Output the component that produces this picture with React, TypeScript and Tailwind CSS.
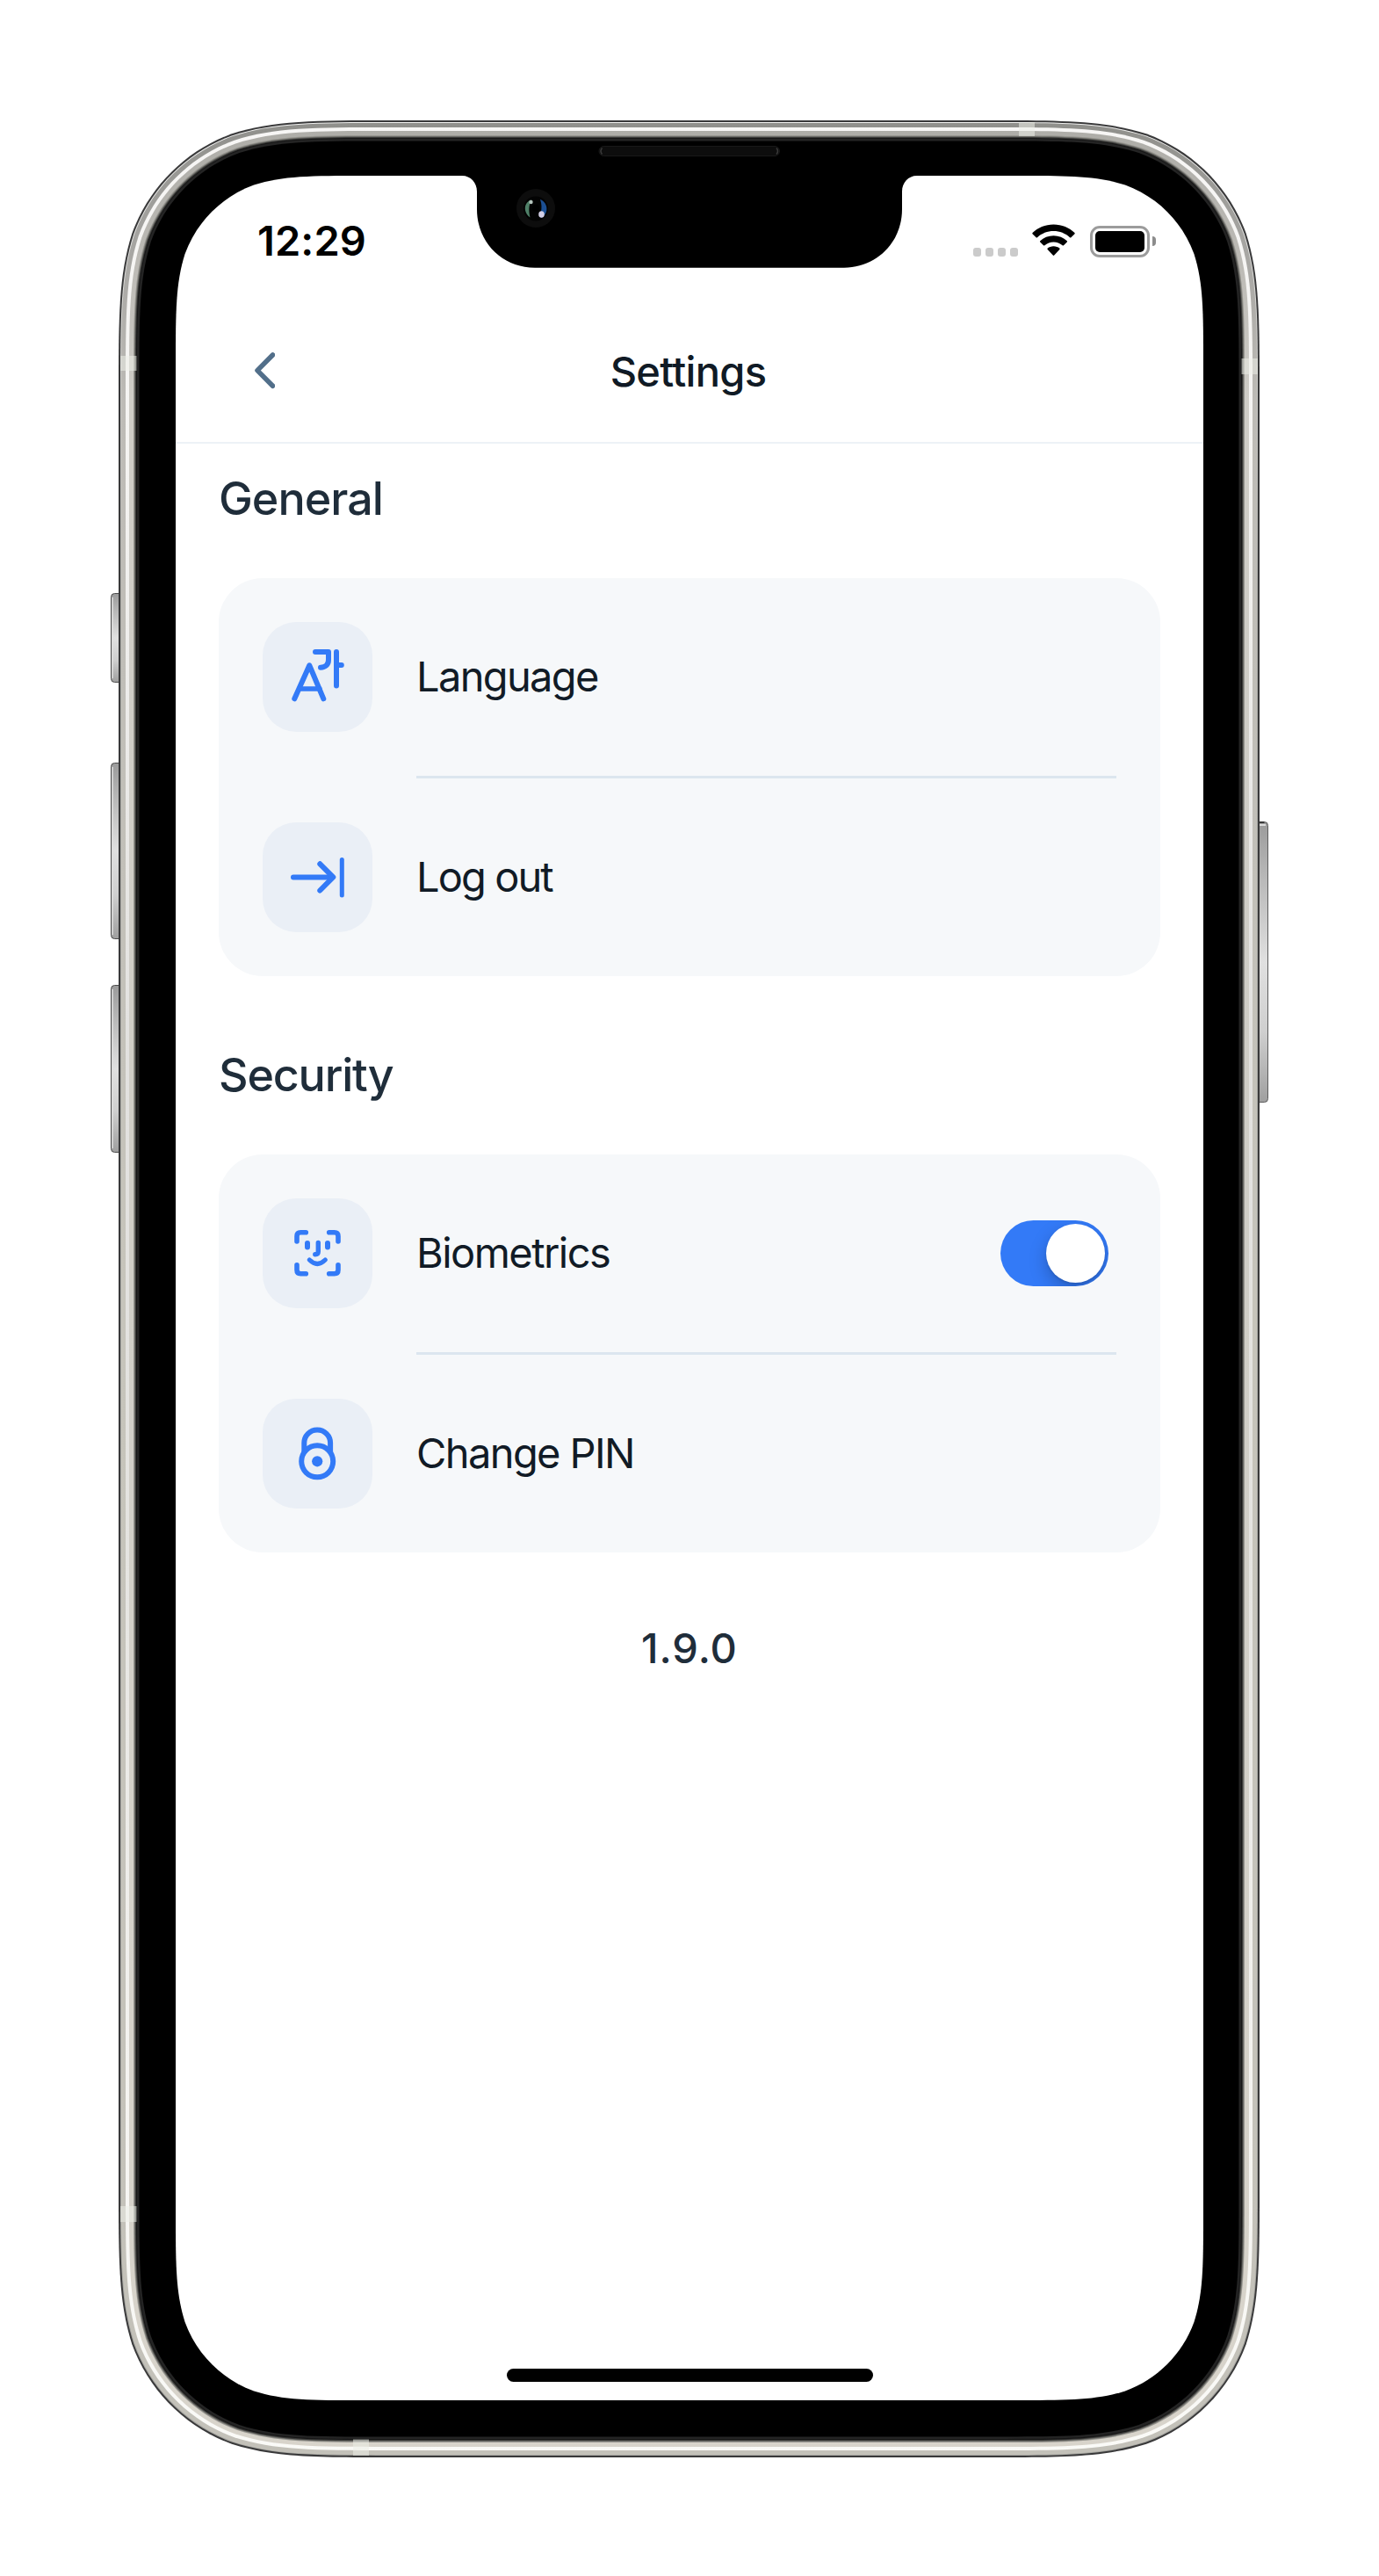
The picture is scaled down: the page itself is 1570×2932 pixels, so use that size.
import { useState, type ReactNode } from 'react';

/** Rounded rectangle with continuous-curvature corners. */
function squircle(x: number, y: number, w: number, h: number, r: number) {
  const a = 1.52866471 * r;
  const b = 1.08849323 * r;
  const c = 0.86840689 * r;
  const d = 0.63149379 * r;
  const e = 0.07491139 * r;
  const f = 0.37282383 * r;
  const g = 0.16905956 * r;
  const R = x + w;
  const B = y + h;
  return [
    `M${x + a} ${y}H${R - a}`,
    `C${R - b} ${y} ${R - c} ${y} ${R - d} ${y + e}`,
    `C${R - f} ${y + g} ${R - g} ${y + f} ${R - e} ${y + d}`,
    `C${R} ${y + c} ${R} ${y + b} ${R} ${y + a}`,
    `V${B - a}`,
    `C${R} ${B - b} ${R} ${B - c} ${R - e} ${B - d}`,
    `C${R - g} ${B - f} ${R - f} ${B - g} ${R - d} ${B - e}`,
    `C${R - c} ${B} ${R - b} ${B} ${R - a} ${B}`,
    `H${x + a}`,
    `C${x + b} ${B} ${x + c} ${B} ${x + d} ${B - e}`,
    `C${x + f} ${B - g} ${x + g} ${B - f} ${x + e} ${B - d}`,
    `C${x} ${B - c} ${x} ${B - b} ${x} ${B - a}`,
    `V${y + a}`,
    `C${x} ${y + b} ${x} ${y + c} ${x + e} ${y + d}`,
    `C${x + g} ${y + f} ${x + f} ${y + g} ${x + d} ${y + e}`,
    `C${x + c} ${y} ${x + b} ${y} ${x + a} ${y}Z`,
  ].join('');
}

const body = (inset: number) =>
  squircle(135 + inset, 137 + inset, 1299 - 2 * inset, 2660 - 2 * inset, 204 - inset);

const layers: [number, string][] = [
  [0, '#39393a'],
  [2, 'url(#rim)'],
  [3, 'url(#metal)'],
  [8, 'url(#shine)'],
  [12, 'url(#metal2)'],
  [17, '#96958f'],
  [18, '#6b6b67'],
  [19, '#3a3a38'],
  [20, '#161616'],
  [21, '#242424'],
  [23.5, '#000000'],
];

const bands = [
  [137, 405, 18.5, 17],
  [137, 2511, 18.5, 18],
  [1413.5, 408, 18.5, 18],
  [1160, 139, 18, 16],
  [402, 2776.5, 18, 18.5],
];

const leftButtons = [
  [675, 102],
  [868, 201],
  [1121, 191],
];

function PhoneBody() {
  return (
    <svg className="absolute inset-0" width="1570" height="2932" viewBox="0 0 1570 2932" fill="none" aria-hidden="true">
      <defs>
        <linearGradient id="rim" x1="0" y1="137" x2="0" y2="2797" gradientUnits="userSpaceOnUse">
          <stop offset="0" stopColor="#f2f2f1" />
          <stop offset="0.08" stopColor="#d5d5d2" />
          <stop offset="0.2" stopColor="#a9a9a5" />
          <stop offset="1" stopColor="#a5a5a0" />
        </linearGradient>
        <linearGradient id="metal" x1="0" y1="137" x2="0" y2="2797" gradientUnits="userSpaceOnUse">
          <stop offset="0" stopColor="#8f8f8b" />
          <stop offset="0.05" stopColor="#a5a4a1" />
          <stop offset="0.12" stopColor="#bdbbb6" />
          <stop offset="0.5" stopColor="#c6c4bb" />
          <stop offset="1" stopColor="#c3c1b9" />
        </linearGradient>
        <linearGradient id="metal2" x1="0" y1="137" x2="0" y2="2797" gradientUnits="userSpaceOnUse">
          <stop offset="0" stopColor="#adaca7" />
          <stop offset="0.06" stopColor="#bcbab5" />
          <stop offset="0.12" stopColor="#cfcdc7" />
          <stop offset="0.5" stopColor="#d0cec7" />
          <stop offset="1" stopColor="#d8d4cb" />
        </linearGradient>
        <linearGradient id="shine" x1="0" y1="137" x2="0" y2="2797" gradientUnits="userSpaceOnUse">
          <stop offset="0" stopColor="#f7f6f5" />
          <stop offset="0.15" stopColor="#f4f3f1" />
          <stop offset="0.4" stopColor="#e2e1df" />
          <stop offset="0.6" stopColor="#e4e3e0" />
          <stop offset="0.85" stopColor="#f5f4f1" />
          <stop offset="1" stopColor="#fafaf7" />
        </linearGradient>
        <linearGradient id="button" x1="0" y1="0" x2="0" y2="1">
          <stop offset="0" stopColor="#9b9b9b" />
          <stop offset="0.2" stopColor="#b8b8b8" />
          <stop offset="0.5" stopColor="#e0e0e0" />
          <stop offset="0.75" stopColor="#cfcfcf" />
          <stop offset="1" stopColor="#9f9f9f" />
        </linearGradient>
      </defs>

      {leftButtons.map(([y, h]) => (
        <g key={y}>
          <rect x="126.5" y={y + 0.5} width="20" height={h - 1} rx="4" fill="url(#button)" stroke="#4c4c4c" />
          <path d={`M128 ${y + 5}V${y + h - 5}`} stroke="#dcdcdc" strokeWidth="1.5" />
        </g>
      ))}
      <rect x="1424" y="935.5" width="19.5" height="319" rx="4" fill="url(#button)" stroke="#5c5c5c" />
      <path d="M1434 936H1439.5" stroke="#222222" strokeWidth="1.5" />
      <path d="M1434 939H1441" stroke="#dddddd" strokeWidth="2" />

      {layers.map(([inset, fill]) => (
        <path key={inset} d={body(inset)} fill={fill} />
      ))}
      {bands.map(([x, y, w, h]) => (
        <rect key={`${x}-${y}`} x={x} y={y} width={w} height={h} fill="#eceee8" fillOpacity="0.55" />
      ))}

      <path d={squircle(200, 200, 1170, 2532, 141)} fill="#ffffff" />
      <path
        d="M526 199V200C536 200 543 208 543 218V238C543 276 572 304.700 609 304.700H961C998 304.700 1027 276 1027 238V218C1027 208 1034 200 1044 200V199Z"
        fill="#000000"
      />

      <rect x="682" y="166.500" width="205.500" height="11" rx="5.500" fill="#0d0d0d" stroke="#181818" />
      <path d="M685.500 168.500Q682.500 172 685.500 175.500M884 168.500Q887 172 884 175.500" stroke="#3a3a3a" strokeWidth="1.500" />

      <circle cx="610" cy="237" r="22" fill="#0d0d0d" />
      <circle cx="610" cy="237.500" r="14" fill="#030303" />
      <path d="M605 227.500C596.500 230 595 241 603.500 247.500C602 241 601.500 234 605 227.500Z" fill="#4f8068" />
      <path d="M615 227C624.500 231 625 243.500 616 248C613.500 245 619 238 615 227Z" fill="#1b4f93" />
      <circle cx="604.500" cy="230" r="2.200" fill="#b4c4bc" />
      <ellipse cx="616.500" cy="244" rx="3.300" ry="3.800" fill="#d3cfe6" />
      <circle cx="610" cy="237" r="4" fill="#000000" />
    </svg>
  );
}

function SignalDots() {
  return (
    <div className="mb-px flex gap-[4.700px]">
      {[0, 1, 2, 3].map((i) => (
        <span key={i} className="size-[9.300px] rounded-[3px] bg-[#cbcbcb]" />
      ))}
    </div>
  );
}

function WifiIcon() {
  return (
    <svg className="mb-px" width="49" height="37" viewBox="0 0 49 37" fill="#000000" aria-label="Wi-Fi">
      <path d="M24.500 0.500C34 0.500 42.500 4.300 48.500 10Q49 10.600 48.500 11.200L44.400 15.200Q43.700 15.800 43 15.200C38 10.700 31.500 8.100 24.500 8.100S11 10.700 6 15.200Q5.300 15.800 4.600 15.200L0.500 11.200Q0 10.600 0.500 10C6.500 4.300 15 0.500 24.500 0.500Z" />
      <path d="M24.500 13.300C30.500 13.300 35.800 15.500 39.800 19.200Q40.400 19.800 39.800 20.400L36 24.200Q35.300 24.800 34.600 24.200C31.800 21.800 28.300 20.400 24.500 20.400S17.200 21.800 14.400 24.200Q13.700 24.800 13 24.200L9.200 20.400Q8.600 19.800 9.200 19.200C13.200 15.500 18.500 13.300 24.500 13.300Z" />
      <path d="M24.500 25.300C27.200 25.300 29.500 26.200 31.300 27.600Q31.900 28.200 31.300 28.900L25.200 35.600Q24.500 36.300 23.800 35.600L17.700 28.900Q17.100 28.200 17.700 27.600C19.500 26.200 21.800 25.300 24.500 25.300Z" />
    </svg>
  );
}

function BatteryIcon() {
  return (
    <div className="flex items-center gap-[3px]">
      <div className="h-9 w-[68px] rounded-[11px] border-3 border-[#9c9c9c] p-[3px]">
        <div className="size-full rounded-[5px] bg-black" />
      </div>
      <div className="h-[11px] w-1 rounded-r-full bg-[#8c8c8c]" />
    </div>
  );
}

function StatusBar() {
  return (
    <div className="flex h-[147px] items-center justify-between pr-[54px] pl-[93px]">
      <span className="text-[47px] leading-[60px] font-semibold tracking-[0.100px] text-black">12:29</span>
      <div className="flex items-end">
        <SignalDots />
        <div className="ml-[16px] flex">
          <WifiIcon />
        </div>
        <div className="ml-[17px]">
          <BatteryIcon />
        </div>
      </div>
    </div>
  );
}

function Header() {
  return (
    <header className="grid h-[158px] grid-cols-[1fr_auto_1fr] items-center border-b-2 border-[#edf2f6] pb-[6px]">
      <button className="ml-[89px] justify-self-start" aria-label="Back">
        <svg width="24" height="42" viewBox="0 0 24 42" fill="none" stroke="#526f8a" strokeWidth="5.600" strokeLinecap="round" strokeLinejoin="round">
          <path d="M21.500 3L4 20.600L21.500 38.200" />
        </svg>
      </button>
      <h1 className="mt-px mr-[3px] text-[47px] leading-[60px] font-medium tracking-[-0.700px] text-[#101a25]">Settings</h1>
    </header>
  );
}

function IconTile({ children }: { children: ReactNode }) {
  return (
    <div className="size-[125px] shrink-0 rounded-[38px] bg-[#eaeff6]">
      <svg width="125" height="125" viewBox="0 0 125 125" fill="none" stroke="#337af7" strokeWidth="6" strokeLinecap="round" strokeLinejoin="round">
        {children}
      </svg>
    </div>
  );
}

const LanguageIcon = () => (
  <>
    <path d="M36.300 87.300L53.300 49.300L69.300 87.300" />
    <path d="M42 76H65" strokeWidth="5.300" />
    <path d="M60 34H75V43C75 48.500 71.500 51.700 66 51.700" />
    <path d="M84 34V72.500M84 49H89.800" />
  </>
);

const LogOutIcon = () => (
  <>
    <path d="M35 62.400H79" />
    <path d="M65.300 47.300L80.300 62.400L65.300 77.500" />
    <path d="M90.300 42.500V83" strokeWidth="5" />
  </>
);

const FaceIcon = () => (
  <>
    <g strokeWidth="5.600">
      <path d="M39 49V43Q39 38.800 43.300 38.800H49.300" />
      <path d="M75.700 38.800H81.700Q86 38.800 86 43V49" />
      <path d="M86 75.700V81.500Q86 85.700 81.700 85.700H75.700" />
      <path d="M49.300 85.700H43.300Q39 85.700 39 81.500V75.700" />
    </g>
    <path d="M51 51V55.500M74 51V55.500" />
    <path d="M63.300 50.500V60.500Q63.300 63.700 59.800 63.700" strokeWidth="5.400" />
    <path d="M53.300 70Q62.300 78.800 71.300 70" strokeWidth="5.200" />
  </>
);

const LockIcon = () => (
  <>
    <path d="M47.300 62V50.300A14.900 14.900 0 0 1 77.100 50.300V62" strokeLinecap="butt" />
    <circle cx="62.200" cy="71.300" r="18" />
    <circle cx="62.200" cy="71.300" r="6.100" fill="#337af7" stroke="none" />
  </>
);

function Toggle() {
  const [on, setOn] = useState(true);
  return (
    <button
      role="switch"
      aria-checked={on}
      aria-label="Biometrics"
      onClick={() => setOn(!on)}
      className={`mr-[9px] ml-auto flex h-[75px] w-[123px] items-center overflow-hidden rounded-full p-[4px] ${on ? 'justify-end bg-[#337af7]' : 'justify-start bg-[#d5dce5]'}`}
    >
      <span className="size-[67.500px] rounded-full bg-white shadow-[0_8px_20px_rgba(0,0,0,0.22),0_2px_3px_rgba(0,0,0,0.1)]" />
    </button>
  );
}

function Row({ icon, label, children }: { icon: ReactNode; label: ReactNode; children?: ReactNode }) {
  return (
    <div className="flex items-center">
      <IconTile>{icon}</IconTile>
      <div className="-mt-px ml-[50px] text-[47px] leading-[60px] text-[#111b26]">{label}</div>
      {children}
    </div>
  );
}

function Section({ title, className, children }: { title: ReactNode; className: string; children: ReactNode }) {
  return (
    <section className={className}>
      <h2 className="text-[52px] leading-[60px] font-medium text-[#1f2d3a]">{title}</h2>
      <div className="mt-[60px] flex flex-col gap-[50px] rounded-[50px] bg-[#f6f8fa] p-[50px]">{children}</div>
    </section>
  );
}

const Divider = () => <div className="ml-[175px] h-[3px] bg-[#dce6ef]" />;

export default function App() {
  return (
    <div className="relative h-[2932px] w-[1570px] bg-white font-['Inter',sans-serif]">
      <PhoneBody />
      <div className="relative flex h-full flex-col px-[200px] py-[200px]">
        <StatusBar />
        <Header />
        <main className="flex flex-1 flex-col px-[49px]">
          <Section className="pt-[33px]" title={<span className="tracking-[-1.000px]">General</span>}>
            <Row icon={<LanguageIcon />} label={<span className="tracking-[-1.650px]">Language</span>} />
            <Divider />
            <Row icon={<LogOutIcon />} label={<span className="tracking-[-1.900px]">Log out</span>} />
          </Section>
          <Section className="pt-[83px]" title={<span className="tracking-[-1.200px]">Security</span>}>
            <Row icon={<FaceIcon />} label={<span className="tracking-[-1.550px]">Biometrics</span>}>
              <Toggle />
            </Row>
            <Divider />
            <Row icon={<LockIcon />} label={<span className="tracking-[-1.600px]">Change PIN</span>} />
          </Section>
          <p className="mt-[79px] text-center text-[47px] leading-[60px] font-medium tracking-[0.950px] text-[#1f2d3a]">1.9.0</p>
          <div className="mx-auto mt-auto mb-[21px] h-[15px] w-[417px] rounded-full bg-black" />
        </main>
      </div>
    </div>
  );
}
